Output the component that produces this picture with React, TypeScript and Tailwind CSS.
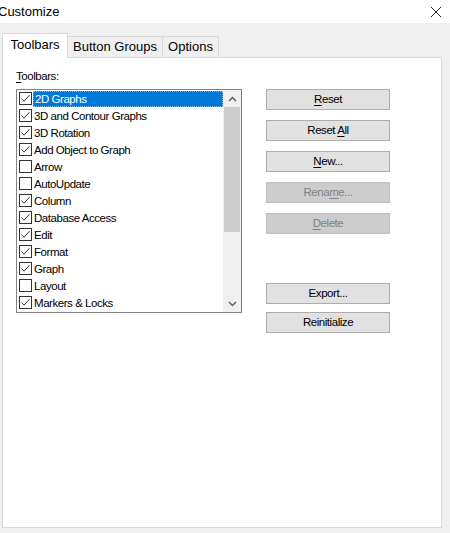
import React from "react";

const items = [
  { label: "2D Graphs", on: true },
  { label: "3D and Contour Graphs", on: true },
  { label: "3D Rotation", on: true },
  { label: "Add Object to Graph", on: true },
  { label: "Arrow", on: false },
  { label: "AutoUpdate", on: false },
  { label: "Column", on: true },
  { label: "Database Access", on: true },
  { label: "Edit", on: true },
  { label: "Format", on: true },
  { label: "Graph", on: true },
  { label: "Layout", on: false },
  { label: "Markers & Locks", on: true },
];

function CheckBox({ on }: { on: boolean }) {
  return (
    <div className="w-[13px] h-[13px] shrink-0 border border-[#333333] bg-white">
      {on && (
        <svg width="11" height="11" viewBox="0 0 11 11">
          <polyline points="1.5,5.5 4,8.2 9.5,2.2" fill="none" stroke="#333333" strokeWidth="1" />
        </svg>
      )}
    </div>
  );
}

function Btn({ children, disabled }: { children: React.ReactNode; disabled?: boolean }) {
  return (
    <div
      className={
        disabled
          ? "w-[124px] h-[21px] flex items-center justify-center border border-[#bfbfbf] bg-[#cccccc] text-[#838383]"
          : "w-[124px] h-[21px] flex items-center justify-center border border-[#adadad] bg-[#e1e1e1] text-black"
      }
    >
      <span>{children}</span>
    </div>
  );
}

export default function App() {
  return (
    <div
      className="w-[450px] h-[533px] bg-[#f0f0f0] overflow-hidden text-black"
      style={{ fontFamily: '"Liberation Sans", Arial, sans-serif' }}
    >
      {/* title bar */}
      <div className="h-[23px] bg-white flex items-center justify-between">
        <span className="-ml-[2px] text-[13px] leading-[16px]">Customize</span>
        <svg width="12" height="12" viewBox="0 0 12 12" className="mr-[8px] mt-[1px]">
          <path d="M1 1 L11 11 M11 1 L1 11" stroke="#222" strokeWidth="1" />
        </svg>
      </div>

      {/* tabs */}
      <div className="h-[34px] flex items-end pl-[2px] text-[13px]">
        <div className="relative z-10 -mb-px h-[25px] w-[66px] bg-white border-l border-t border-r border-[#d9d9d9] flex items-center justify-center pb-[2px]">
          Toolbars
        </div>
        <div className="h-[21px] w-[95px] border-t border-r border-[#d9d9d9] flex items-center justify-center">
          Button Groups
        </div>
        <div className="h-[21px] w-[56px] border-t border-r border-[#d9d9d9] flex items-center justify-center">
          Options
        </div>
      </div>

      {/* panel */}
      <div className="ml-[2px] w-[440px] h-[471px] bg-white border border-[#d9d9d9] pl-[13px] pt-[11px] flex items-start gap-[24px] text-[11.5px] tracking-[-0.45px]">
        <div className="flex flex-col">
          <div className="leading-[14px] mb-[6px]">
            <span className="underline underline-offset-2">T</span>oolbars:
          </div>
          <div className="w-[226px] h-[224px] border border-[#828282] flex">
            <div className="flex-1 flex flex-col">
              {items.map((it, i) => (
                <div key={it.label} className="h-[17px] flex items-center pl-[2px]">
                  <CheckBox on={it.on} />
                  <div
                    className={
                      i === 0
                        ? "ml-[1px] flex-1 h-[16px] flex items-center pl-px bg-[#0078d7] text-white border border-dotted border-[#7fb8ea] leading-[14px]"
                        : "ml-[2px] flex-1 h-[16px] flex items-center leading-[14px]"
                    }
                  >
                    {it.label}
                  </div>
                </div>
              ))}
            </div>
            <div className="w-[18px] bg-[#f0f0f0] flex flex-col">
              <div className="h-[17px] flex items-center justify-center">
                <svg width="9" height="6" viewBox="0 0 9 6">
                  <polyline points="1,5 4.5,1.5 8,5" fill="none" stroke="#606060" strokeWidth="1.5" />
                </svg>
              </div>
              <div className="mx-[1px] h-[125px] bg-[#cdcdcd]" />
              <div className="flex-1" />
              <div className="h-[17px] flex items-center justify-center">
                <svg width="9" height="6" viewBox="0 0 9 6">
                  <polyline points="1,1 4.5,4.5 8,1" fill="none" stroke="#606060" strokeWidth="1.5" />
                </svg>
              </div>
            </div>
          </div>
        </div>

        <div className="flex flex-col pt-[20px]">
          <Btn>
            <span className="underline underline-offset-2">R</span>eset
          </Btn>
          <div className="mt-[10px]">
            <Btn>
              Reset <span className="underline underline-offset-2">A</span>ll
            </Btn>
          </div>
          <div className="mt-[10px]">
            <Btn>
              <span className="underline underline-offset-2">N</span>ew...
            </Btn>
          </div>
          <div className="mt-[10px]">
            <Btn disabled>
              Rena<span className="underline underline-offset-2">m</span>e...
            </Btn>
          </div>
          <div className="mt-[10px]">
            <Btn disabled>
              <span className="underline underline-offset-2">D</span>elete
            </Btn>
          </div>
          <div className="mt-[49px]">
            <Btn>Export...</Btn>
          </div>
          <div className="mt-[8px]">
            <Btn>Reinitialize</Btn>
          </div>
        </div>
      </div>
    </div>
  );
}
